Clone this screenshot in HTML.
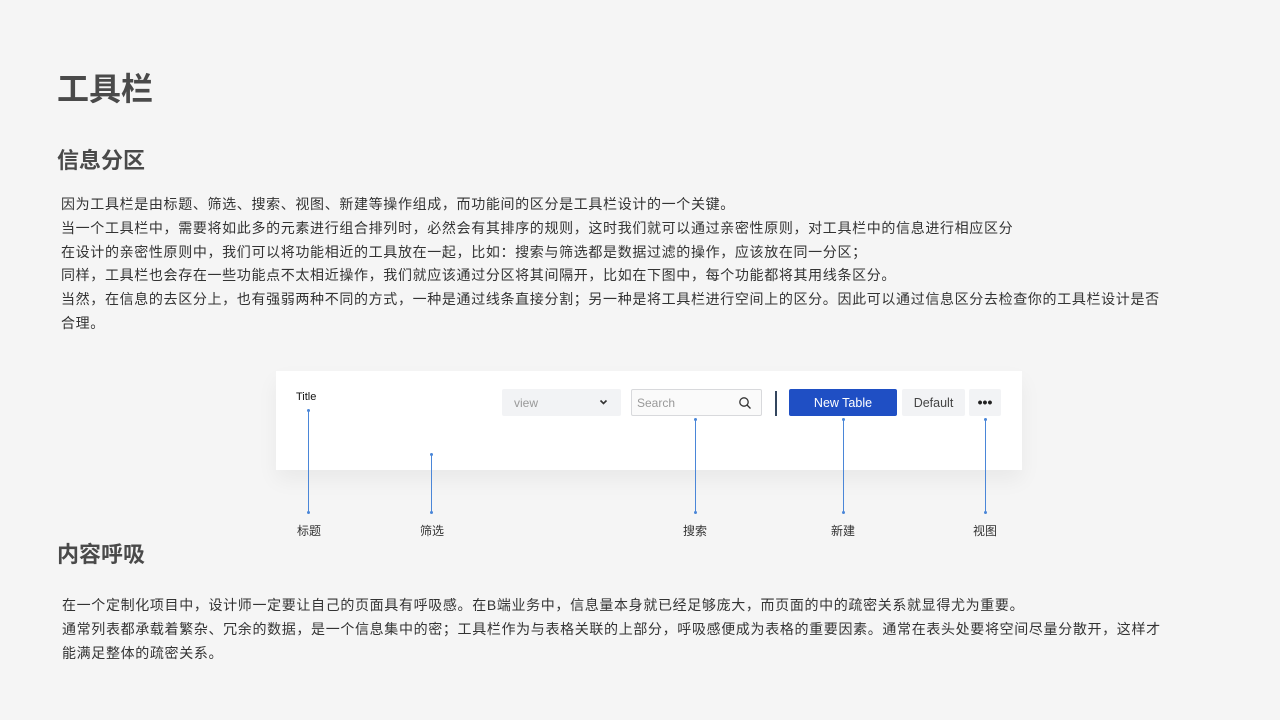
<!DOCTYPE html>
<html><head><meta charset="utf-8"><style>
body{margin:0;width:1280px;height:720px;background:#f5f5f5;font-family:"Liberation Sans","Noto Sans CJK SC",sans-serif;position:relative;overflow:hidden;color:#333}
.a{position:absolute;white-space:nowrap}
h1{position:absolute;left:57px;top:67px;margin:0;font-size:32px;font-weight:bold;color:#4a4a4a;line-height:44px}
h2{position:absolute;left:57px;margin:0;font-size:22px;font-weight:bold;color:#4a4a4a;line-height:30px}
.p{position:absolute;left:61px;font-size:14px;letter-spacing:0.65px;line-height:23.8px;color:#333;width:1150px;white-space:nowrap}
.card{position:absolute;left:276px;top:371px;width:746px;height:99px;background:#fff;box-shadow:0 10px 20px rgba(0,0,0,.05)}
.ln{position:absolute;width:1px;background:#4a86d8}
.dot{position:absolute;width:3px;height:3px;border-radius:50%;background:#4a86d8}
.lb{position:absolute;top:522px;font-size:12px;color:#333;transform:translateX(-50%)}
</style></head><body>
<h1>工具栏</h1>
<h2 style="top:146px">信息分区</h2>
<div class="p" style="top:193px">因为工具栏是由标题、筛选、搜索、视图、新建等操作组成，而功能间的区分是工具栏设计的一个关键。<br>当一个工具栏中，需要将如此多的元素进行组合排列时，必然会有其排序的规则，这时我们就可以通过亲密性原则，对工具栏中的信息进行相应区分<br>在设计的亲密性原则中，我们可以将功能相近的工具放在一起，比如：搜索与筛选都是数据过滤的操作，应该放在同一分区；<br>同样，工具栏也会存在一些功能点不太相近操作，我们就应该通过分区将其间隔开，比如在下图中，每个功能都将其用线条区分。<br>当然，在信息的去区分上，也有强弱两种不同的方式，一种是通过线条直接分割；另一种是将工具栏进行空间上的区分。因此可以通过信息区分去检查你的工具栏设计是否<br>合理。</div>
<div class="card"></div>
<div class="a" style="left:296px;top:391px;font-size:11px;color:#111">Title</div>
<div class="a" style="left:502px;top:389px;width:119px;height:27px;background:#f2f3f5;border-radius:2px"></div>
<div class="a" style="left:514px;top:396px;font-size:12px;color:#999">view</div>
<svg class="a" style="left:599px;top:399px" width="9" height="7"><path d="M1.5 1.5L4.5 4.5L7.5 1.5" stroke="#333" stroke-width="1.6" fill="none"/></svg>
<div class="a" style="left:631px;top:389px;width:129px;height:25px;border:1px solid #d8d9dc;background:#fafafa;border-radius:2px"></div>
<div class="a" style="left:637px;top:396px;font-size:12px;color:#999">Search</div>
<svg class="a" style="left:738px;top:396px" width="14" height="14"><circle cx="6" cy="6" r="4.2" stroke="#333" stroke-width="1.3" fill="none"/><path d="M9 9L12.5 12.5" stroke="#333" stroke-width="1.3"/></svg>
<div class="a" style="left:775px;top:391px;width:2px;height:25px;background:#33465e"></div>
<div class="a" style="left:789px;top:389px;width:108px;height:27px;background:#1f4fc4;border-radius:2px;color:#fff;font-size:12.5px;line-height:28px;text-align:center">New Table</div>
<div class="a" style="left:902px;top:389px;width:63px;height:27px;background:#f2f3f5;border-radius:2px;color:#444;font-size:12.5px;line-height:28px;text-align:center">Default</div>
<div class="a" style="left:969px;top:389px;width:32px;height:27px;background:#f2f3f5;border-radius:2px;color:#222;font-size:14px;line-height:26px;text-align:center;font-weight:bold">•••</div>
<div class="ln" style="left:308px;top:410px;height:102px"></div><div class="dot" style="left:307px;top:409px"></div><div class="dot" style="left:307px;top:511px"></div>
<div class="ln" style="left:431px;top:454px;height:58px"></div><div class="dot" style="left:430px;top:453px"></div><div class="dot" style="left:430px;top:511px"></div>
<div class="ln" style="left:695px;top:419px;height:93px"></div><div class="dot" style="left:694px;top:418px"></div><div class="dot" style="left:694px;top:511px"></div>
<div class="ln" style="left:843px;top:419px;height:93px"></div><div class="dot" style="left:842px;top:418px"></div><div class="dot" style="left:842px;top:511px"></div>
<div class="ln" style="left:985px;top:419px;height:93px"></div><div class="dot" style="left:984px;top:418px"></div><div class="dot" style="left:984px;top:511px"></div>
<div class="lb" style="left:309px">标题</div>
<div class="lb" style="left:432px">筛选</div>
<div class="lb" style="left:695px">搜索</div>
<div class="lb" style="left:843px">新建</div>
<div class="lb" style="left:985px">视图</div>
<h2 style="top:540px">内容呼吸</h2>
<div class="p" style="top:594px;left:62px">在一个定制化项目中，设计师一定要让自己的页面具有呼吸感。在B端业务中，信息量本身就已经足够庞大，而页面的中的疏密关系就显得尤为重要。<br>通常列表都承载着繁杂、冗余的数据，是一个信息集中的密；工具栏作为与表格关联的上部分，呼吸感便成为表格的重要因素。通常在表头处要将空间尽量分散开，这样才<br>能满足整体的疏密关系。</div>
</body></html>
